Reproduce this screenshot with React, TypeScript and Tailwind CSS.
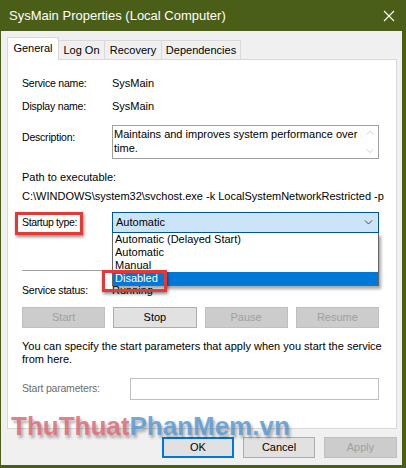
import React from "react";

function Chevron({ up = false, color = "#606060", size = 10 }: { up?: boolean; color?: string; size?: number }) {
  return (
    <svg width={size} height={size * 0.6} viewBox="0 0 10 6" fill="none">
      <path d={up ? "M1 5.5 L5 1.5 L9 5.5" : "M1 0.5 L5 4.5 L9 0.5"} stroke={color} strokeWidth="1" />
    </svg>
  );
}

export default function App() {
  return (
    <div className="relative w-[406px] h-[468px] bg-[#4b5e18] flex flex-col overflow-hidden font-['Liberation_Sans',Arial,sans-serif] text-[11px] text-black">
      {/* Title bar */}
      <div className="h-[31px] flex items-center justify-between pl-[9px] pr-[11px] shrink-0">
        <span className="text-white text-[13px] leading-none">SysMain Properties (Local Computer)</span>
        <svg width="12" height="12" viewBox="0 0 12 12">
          <path d="M1 1 L11 11 M11 1 L1 11" stroke="#ffffff" strokeWidth="1.1" />
        </svg>
      </div>

      {/* Body */}
      <div className="flex-1 ml-[1px] mr-[4px] mb-[3px] bg-[#f0f0f0] flex flex-col pl-[6px] pr-[5px] pt-[6px]">
        {/* Tabs */}
        <div className="flex items-end h-[22px] relative z-10">
          <div className="w-[52px] h-[23px] -mb-px bg-white border border-b-0 border-[#d9d9d9] flex items-center justify-center pb-[2px]">
            General
          </div>
          <div className="w-[46px] h-[19px] border-t border-r border-[#d9d9d9] flex items-center justify-center">Log On</div>
          <div className="w-[57px] h-[19px] border-t border-r border-[#d9d9d9] flex items-center justify-center">Recovery</div>
          <div className="w-[79px] h-[19px] border-t border-r border-[#d9d9d9] flex items-center justify-center">Dependencies</div>
        </div>

        {/* Panel */}
        <div className="h-[370px] bg-white border border-[#d9d9d9] pl-[14px] pr-[17px] pt-[16px] flex flex-col">
          <div className="flex h-[15px] items-center">
            <div className="w-[90px] text-[10.5px] tracking-[-0.2px]">Service name:</div>
            <div>SysMain</div>
          </div>
          <div className="flex h-[15px] items-center mt-[8px]">
            <div className="w-[90px] text-[10.5px] tracking-[-0.2px]">Display name:</div>
            <div>SysMain</div>
          </div>
          <div className="flex mt-[11px]">
            <div className="w-[90px] pt-[5px] text-[10.5px] tracking-[-0.2px]">Description:</div>
            <div className="flex-1 h-[34px] border border-[#a0a0a0] flex">
              <div className="flex-1 pl-[1px] pt-[1px] leading-[14px]">
                Maintains and improves system performance over time.
              </div>
              <div className="w-[17px] flex flex-col items-center justify-between py-[4px]">
                <Chevron up color="#c4c4c4" size={8} />
                <Chevron color="#c4c4c4" size={8} />
              </div>
            </div>
          </div>
          <div className="h-[15px] flex items-center mt-[11px]">Path to executable:</div>
          <div className="h-[15px] flex items-center mt-[4px] whitespace-nowrap">
            C:\WINDOWS\system32\svchost.exe -k LocalSystemNetworkRestricted -p
          </div>

          {/* Startup type */}
          <div className="flex items-center mt-[8px] relative z-10">
            <div className="w-[90px] text-[10.5px] tracking-[-0.35px]">Startup type:</div>
            <div className="relative flex-1">
              <div className="h-[21px] bg-[#cce4f7] border border-[#005499] flex items-center justify-between pl-[3px] pr-[5px]">
                <span>Automatic</span>
                <Chevron color="#404040" size={9} />
              </div>
              <div className="absolute left-0 top-full w-full bg-white border border-[#646464] border-t-0 shadow-[2px_3px_3px_rgba(0,0,0,0.35)]">
                <div className="h-[13px] leading-[13px] pl-[2px]">Automatic (Delayed Start)</div>
                <div className="h-[13px] leading-[13px] pl-[2px]">Automatic</div>
                <div className="h-[13px] leading-[13px] pl-[2px]">Manual</div>
                <div className="h-[13px] leading-[13px] pl-[2px] bg-[#0078d7] text-white">Disabled</div>
              </div>
            </div>
          </div>

          <div className="h-px bg-[#a0a0a0] mt-[37px]" />

          <div className="flex h-[15px] items-center mt-[12px]">
            <div className="w-[90px] text-[10.5px] tracking-[-0.2px]">Service status:</div>
            <div>Running</div>
          </div>

          <div className="grid grid-cols-4 gap-[8px] mt-[9px]">
            <div className="h-[21px] bg-[#cccccc] border border-[#bfbfbf] text-[#a0a0a0] flex items-center justify-center">Start</div>
            <div className="h-[21px] bg-[#e1e1e1] border border-[#adadad] flex items-center justify-center">Stop</div>
            <div className="h-[21px] bg-[#cccccc] border border-[#bfbfbf] text-[#a0a0a0] flex items-center justify-center">Pause</div>
            <div className="h-[21px] bg-[#cccccc] border border-[#bfbfbf] text-[#a0a0a0] flex items-center justify-center">Resume</div>
          </div>

          <div className="mt-[12px] leading-[13px] whitespace-nowrap">
            You can specify the start parameters that apply when you start the service
            <br />
            from here.
          </div>

          <div className="flex items-center mt-[12px]">
            <div className="w-[108px] text-[#6d6d6d] text-[10.5px] tracking-[-0.2px]">Start parameters:</div>
            <div className="flex-1 h-[22px] border border-[#bfbfbf] bg-white" />
          </div>
        </div>

        {/* Bottom buttons */}
        <div className="flex justify-end gap-[9px] mt-[8px]">
          <div className="w-[72px] h-[21px] bg-[#e1e1e1] border-2 border-[#0078d7] flex items-center justify-center">OK</div>
          <div className="w-[72px] h-[21px] bg-[#e1e1e1] border border-[#adadad] flex items-center justify-center">Cancel</div>
          <div className="w-[73px] h-[21px] bg-[#cccccc] border border-[#bfbfbf] text-[#a0a0a0] flex items-center justify-center">Apply</div>
        </div>
      </div>

      {/* Red highlight boxes */}
      <div className="absolute left-[15px] top-[212px] w-[68px] h-[23px] border-[3px] border-[#e53935] shadow-[1px_2px_3px_rgba(0,0,0,0.45)] z-20" />
      <div className="absolute left-[102px] top-[270px] w-[65px] h-[22px] border-[3px] border-[#e53935] shadow-[1px_2px_3px_rgba(0,0,0,0.45)] z-20" />

      {/* Watermark */}
      <div className="absolute left-[11px] top-[413px] z-30 text-[26px] font-bold leading-none whitespace-nowrap [text-shadow:2px_3px_3px_rgba(0,0,0,0.3)]">
        <span className="text-[#e06b7b]/85">ThuThuat</span>
        <span className="text-[#5a9bd8]/85">PhanMem.vn</span>
      </div>
    </div>
  );
}
